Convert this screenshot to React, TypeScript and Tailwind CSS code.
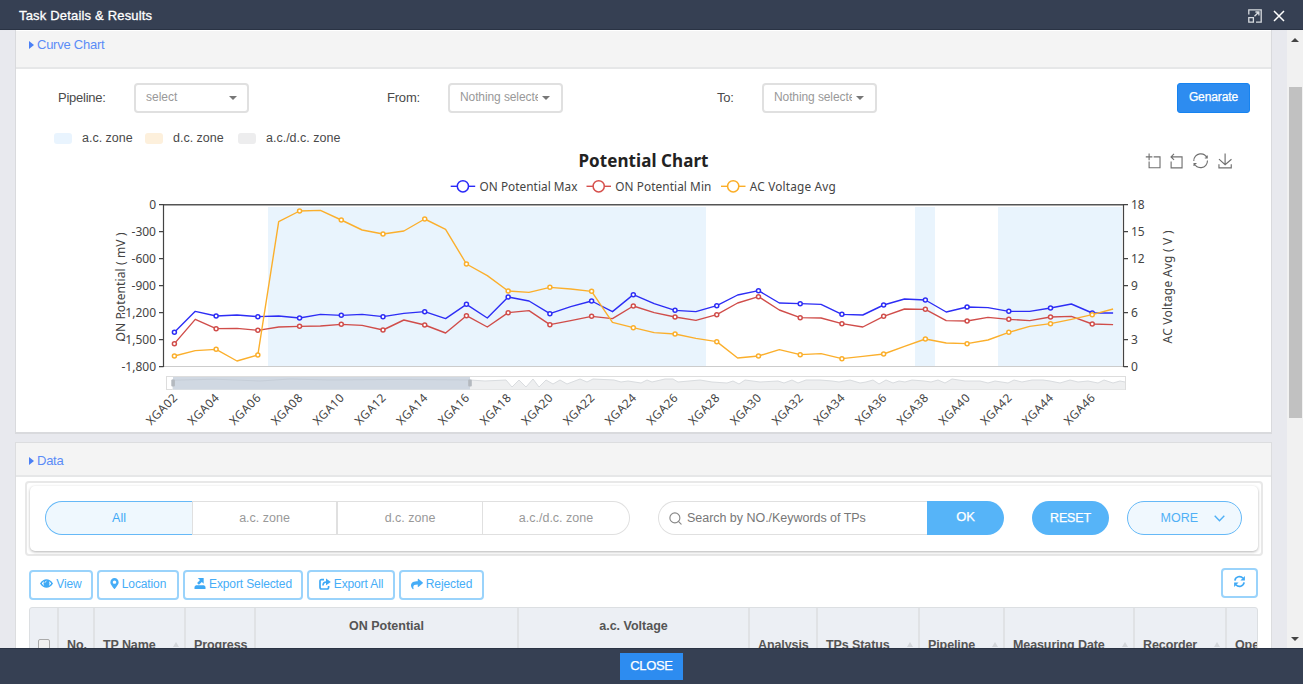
import React from "react";
import { FaMapMarkerAlt, FaShare } from "react-icons/fa";
import { FiSearch } from "react-icons/fi";

const X0 = 174.4;
const STEP = 20.86;
const xAt = (i: number) => X0 + i * STEP;
const yAt = (v: number) => 190 + v / 3;

const maxSeries = [427, 364, 378, 375, 380, 378, 384, 373, 376, 373, 380, 370, 365, 386, 343, 384, 321, 333, 371, 350, 333, 365, 314, 341, 361, 365, 347, 315, 302, 339, 341, 343, 373, 375, 345, 327, 330, 366, 351, 353, 364, 364, 354, 342, 369, 369];
const minSeries = [461, 388, 416, 415, 421, 411, 409, 408, 403, 406, 420, 390, 405, 429, 377, 411, 368, 362, 404, 392, 379, 386, 348, 368, 381, 391, 374, 339, 320, 360, 383, 384, 401, 411, 379, 357, 358, 392, 393, 382, 388, 392, 381, 379, 402, 404];
const acSeries = [498, 482, 478, 513, 495, 95, 63, 61, 90, 120, 132, 123, 87, 118, 222, 257, 303, 307, 292, 297, 304, 397, 413, 428, 432, 445, 455, 504, 498, 479, 494, 491, 506, 499, 492, 469, 447, 459, 461, 450, 427, 409, 401, 388, 374, 357];

const leftTicks = ["0", "-300", "-600", "-900", "-1,200", "-1,500", "-1,800"];
const rightTicks = ["18", "15", "12", "9", "6", "3", "0"];
const xLabels = Array.from({ length: 23 }, (_, i) => "XGA" + String(2 + i * 2).padStart(2, "0"));

const overview =
  "M172 380 L200 380 L215 379 L260 381 L290 379 L320 380 L360 379 L400 380 L440 379 L470 380 L485 381 L506 380 L512 387 L519 380 L526 387 L533 379 L539 387 L546 380 L553 384 L560 380 L567 384 L580 379 L587 382 L593 379 L614 380 L621 382 L628 381 L641 383 L647 380 L652 382 L665 379 L673 379 L678 382 L700 380 L712 382 L727 383 L733 381 L739 384 L745 380 L760 382 L778 381 L784 383 L792 380 L798 383 L806 380 L820 380 L832 381 L839 382 L850 380 L860 383 L866 382 L873 380 L879 384 L886 380 L893 383 L899 381 L905 382 L912 380 L924 381 L931 382 L938 380 L945 383 L952 379 L965 381 L980 381 L988 383 L995 381 L1008 383 L1014 380 L1022 382 L1032 380 L1043 380 L1050 381 L1060 383 L1070 380 L1078 382 L1088 381 L1098 383 L1104 380 L1113 383 L1120 381 L1125 382";

function Line({ values, color }: { values: number[]; color: string }) {
  return (
    <g>
      <polyline points={values.map((v, i) => `${xAt(i)},${yAt(v)}`).join(" ")} fill="none" stroke={color} strokeWidth="1.4" strokeLinejoin="round" />
      {values.map((v, i) => (i % 2 === 0 ? <circle key={i} cx={xAt(i)} cy={yAt(v)} r="2" fill="#fff" stroke={color} strokeWidth="1.5" /> : null))}
    </g>
  );
}

function LegendItem({ x, w, color, label }: { x: number; w: number; color: string; label: string }) {
  return (
    <g>
      <path d={`M${x} 186.3h24.5`} stroke={color} strokeWidth="1.4" />
      <circle cx={x + 12.2} cy="186.3" r="5.6" fill="#fff" stroke={color} strokeWidth="1.5" />
      <text x={x + 28.8} y="190.8" fontSize="11.8" fill="#444" textLength={w}>{label}</text>
    </g>
  );
}

function Chart() {
  return (
    <svg viewBox="16 148 1255 285" className="block h-[285px] w-[1255px] shrink-0 font-['Noto_Sans',sans-serif]">
      <text x="578.5" y="166.5" fontSize="17" fontWeight="700" fill="#222" textLength="130">Potential Chart</text>
      <LegendItem x={450.7} w={98} color="#2a2af8" label="ON Potential Max" />
      <LegendItem x={586.5} w={96} color="#d6504c" label="ON Potential Min" />
      <LegendItem x={721} w={86} color="#fbae28" label="AC Voltage Avg" />

      <g fill="none" stroke="#707070" strokeWidth="4.6">
        <path transform="translate(1145.8 153.6) scale(.245)" d="M0,13.5h26.9 M13.5,26.9V0 M32.1,13.5H58V58H13.5 V32.1" />
        <path transform="translate(1168.6 153.6) scale(.245)" d="M22,1.4L9.9,13.5l12.3,12.3 M10.3,13.5H54.9v44.6 H10.3v-26" />
        <path transform="translate(1193.3 153.4) scale(.245)" d="M47,18.9h9.8V8.7 M56.3,20.1 C52.1,9,40.5,0.6,26.8,2.1C12.6,3.7,1.6,16.2,2.1,30.6 M13,41.1H3.1v10.2 M3.7,39.9c4.2,11.1,15.8,19.5,29.5,18 c14.2-1.6,25.2-14.1,24.7-28.5" />
        <path transform="translate(1217.8 153.4) scale(.25)" d="M4.7,22.9L29.3,45.5L54.7,23.4M4.6,43.6L4.6,58L53.8,58L53.8,43.6M29.2,45.1L29.2,0" />
      </g>

      <g fill="#e9f4fd">
        <rect x="268" y="207" width="438" height="159" />
        <rect x="915" y="207" width="20" height="159" />
        <rect x="998" y="207" width="124" height="159" />
      </g>
      <path d="M164 366.5H1123" stroke="#ccc" />
      <path d="M163 204.7H1124" stroke="#555" strokeWidth="1.4" />
      <path d="M163.5 204V367M1123.5 204V367" stroke="#444" strokeWidth="1.2" />
      {leftTicks.map((t, i) => (
        <g key={i} fill="#444" fontSize="12">
          <path d={`M159 ${204.6 + i * 27}h4.5M1123.5 ${204.6 + i * 27}h4.5`} stroke="#444" strokeWidth="1.2" />
          <text x="156" y={209 + i * 27} textAnchor="end">{t}</text>
          <text x="1131" y={209 + i * 27}>{rightTicks[i]}</text>
        </g>
      ))}
      <text transform="translate(125.2 341.5) rotate(-90)" fontSize="12" fill="#444" textLength="109">ON Potential ( mV )</text>
      <text transform="translate(1171.5 343.5) rotate(-90)" fontSize="12" fill="#444" textLength="113">AC Voltage Avg ( V )</text>

      <Line values={maxSeries} color="#2d2df5" />
      <Line values={minSeries} color="#d04d4a" />
      <Line values={acSeries} color="#fbaf2c" />

      <rect x="166.5" y="376.5" width="959" height="13" fill="#fff" stroke="#ddd" />
      <path d={`${overview} V389.5 H172 Z`} fill="#eeeff0" />
      <path d={overview} fill="none" stroke="#d9dcdf" />
      <rect x="173" y="377" width="297" height="12.5" fill="#d0d8e2" />
      <path d="M173 380.2L215 379.2L260 381L290 379L330 380L400 379.4L470 380" fill="none" stroke="#c6ced8" />
      <rect x="171.3" y="379.5" width="3.6" height="7" rx="1" fill="#b4b9bf" />
      <rect x="468.2" y="379.5" width="3.6" height="7" rx="1" fill="#b4b9bf" />

      {xLabels.map((t, i) => (
        <text key={t} transform={`translate(${xAt(i * 2) + 3.6} 398.8) rotate(-45)`} fontSize="11.8" fill="#444" textAnchor="end" textLength="38">{t}</text>
      ))}
    </svg>
  );
}

function SelectBox({ text, full }: { text: string; full?: boolean }) {
  return (
    <div className="flex h-[30px] w-[115px] items-center rounded-[4px] border-2 border-[#e0e0e0] bg-white px-[10px] pb-px text-[12px] text-[#999]">
      <span className={full ? "w-[83px] overflow-hidden whitespace-nowrap" : "w-[78px] overflow-hidden tracking-[-0.1px] whitespace-nowrap"}>{text}</span>
      <svg viewBox="0 0 8 4" className={full ? "mt-[2px] h-[4px] w-[8px] shrink-0" : "mt-[2px] ml-[4px] h-[4px] w-[8px] shrink-0"}><path d="M0 0h8L4 4z" fill="#777" /></svg>
    </div>
  );
}

function Swatch({ cls, label, w }: { cls: string; label: string; w: string }) {
  return (
    <div className={"flex items-center gap-[10px] " + w}>
      <span className={"h-[11px] w-[18px] rounded-[3px] " + cls} />
      <span className="whitespace-nowrap">{label}</span>
    </div>
  );
}

function PanelTitle({ text, cls }: { text: string; cls: string }) {
  return (
    <div className={"flex items-center gap-[3px] border-b-2 border-[#e6e7e8] bg-[#f4f4f4] pl-[13px] text-[13px] text-[#5b8cf7] " + cls}>
      <svg viewBox="0 0 5 8" className="h-[8px] w-[5px]"><path d="M0 0L5 4L0 8z" fill="#4a7ff5" /></svg>
      <span className="tracking-[-0.25px]">{text}</span>
    </div>
  );
}

const RefreshIcon = () => (
  <svg viewBox="0 0 14 14" className="h-[13px] w-[13px]" fill="none" stroke="#3fa9f5" strokeWidth="1.8">
    <path d="M2 6A5 5 0 0 1 10.8 3.6M12 8A5 5 0 0 1 3.2 10.4" />
    <path d="M12.8 1v4.8H8zM1.2 13V8.2H6z" fill="#3fa9f5" stroke="none" />
  </svg>
);
const UploadIcon = () => (
  <svg viewBox="0 0 12 12" className="h-[11px] w-[12px]" fill="#3fa9f5">
    <path d="M3.5 0H10V6.2L8 4.3 4.8 7.4 2.8 5.4 6 2.2zM1.5 8h9L12 9.5V12H0V9.5z" />
  </svg>
);
const ShareIcon = () => (
  <svg viewBox="0 0 12 12" className="h-[12px] w-[12px]" fill="none" stroke="#3fa9f5" strokeWidth="1.7">
    <path d="M5 1.6H2.6Q1 1.6 1 3.2V9.3Q1 11 2.6 11H8Q9.6 11 9.6 9.3V8" />
    <path d="M4 7.6Q4 4 7.5 4" />
    <path d="M7 .6L11.8 4 7 7.3z" fill="#3fa9f5" stroke="none" />
  </svg>
);
const EyeIcon = () => (
  <svg viewBox="0 0 13 9" className="h-[9px] w-[13px]">
    <path d="M0 4.5Q3 .3 6.5 .3T13 4.5Q10 8.8 6.5 8.8T0 4.5z" fill="#3fa9f5" />
    <path d="M1.8 4.5Q2.6 3 3.9 2.2 3 4.6 4.2 6.9 2.6 6 1.8 4.5zM11.2 4.5Q10.4 3 9.1 2.2 10 4.6 8.8 6.9 10.4 6 11.2 4.5z" fill="#fff" />
    <path d="M4.9 3.8Q5.1 2.3 6.5 2.1" stroke="#fff" strokeWidth=".8" fill="none" />
  </svg>
);

function ActionButton({ w, icon, label }: { w: string; icon: React.ReactNode; label: string }) {
  return (
    <button className={"flex h-[30px] items-center justify-center gap-[3px] rounded-[4px] border-2 border-[#9ad3fb] bg-white pb-[3px] text-[12px] whitespace-nowrap text-[#46adf7] " + w}>
      {icon}
      <span className="tracking-[-0.12px]">{label}</span>
    </button>
  );
}

function Col({ w, label, sort, group }: { w: string; label: string; sort?: boolean; group?: boolean }) {
  return (
    <div className={"flex h-[75px] shrink-0 justify-between overflow-hidden border-r-2 border-[#e0e2e5] " + w + (group ? " justify-center pt-[9px]" : " items-center pr-[5px] pl-[8px]")}>
      <span className={group ? "w-full text-center" : "whitespace-nowrap tracking-[-0.1px]"}>{label}</span>
      {sort && <svg viewBox="0 0 6 5" className="mt-[-3px] h-[5px] w-[6px] shrink-0"><path d="M3 0l3 5H0z" fill="#d3d6da" /></svg>}
    </div>
  );
}

export default function App() {
  return (
    <div className="flex h-[684px] w-[1303px] flex-col overflow-hidden bg-[#e8e9ee] font-['Liberation_Sans',Arial,sans-serif] text-[13px] text-[#4a4a4a]">
      <header className="flex h-[30px] shrink-0 items-center justify-between border-b border-[#2a3344] bg-[#364053] pr-[18px] pl-[19px] text-white">
        <h1 className="mt-[2px] text-[13px] tracking-[0.18px] [-webkit-text-stroke:0.3px_white]">Task Details &amp; Results</h1>
        <div className="mt-[3px] flex items-center gap-[11px]">
          <svg viewBox="0 0 14 14" className="h-[14px] w-[14px]" fill="none" stroke="#d8dbe0" strokeWidth="1.3">
            <path d="M.8 5.5V.8H13.2V13.2H8M.8 8.6H5.4V13.2H.8zM6.5 7.3L10.8 3M7.4 3H10.9V6.5" />
          </svg>
          <svg viewBox="0 0 12 12" className="h-[12px] w-[12px]" stroke="#fff" strokeWidth="1.5"><path d="M1 1l10 10M11 1L1 11" /></svg>
        </div>
      </header>

      <div className="flex h-[618px] shrink-0 overflow-hidden">
        <main className="flex w-[1287px] shrink-0 flex-col pl-[15px]">
          <section className="h-[404px] w-[1257px] shrink-0 overflow-hidden border-x border-b-2 border-[#d9dadd] bg-white">
            <PanelTitle text="Curve Chart" cls="h-[39px] pb-[8px] border-t border-t-white" />
            <div className="flex h-[57px] items-center pl-[42px] text-[13px]">
              <span className="w-[76px] tracking-[-0.25px]">Pipeline:</span>
              <SelectBox text="select" full />
              <span className="ml-[138px] w-[61px] tracking-[-0.2px]">From:</span>
              <SelectBox text="Nothing selected" />
              <span className="ml-[154px] w-[45px] tracking-[-0.2px]">To:</span>
              <SelectBox text="Nothing selected" />
              <button className="ml-[300px] h-[30px] w-[73px] rounded-[3px] border border-[#1683f0] bg-[#2d8cf0] pb-px text-[12px] tracking-[-0.1px] text-white [-webkit-text-stroke:0.25px_white]">Genarate</button>
            </div>
            <div className="flex h-[22px] items-center pt-[3px] pl-[38px] text-[12.5px]">
              <Swatch cls="bg-[#e9f4fe]" label="a.c. zone" w="w-[91px]" />
              <Swatch cls="bg-[#fdf0dc]" label="d.c. zone" w="w-[93px]" />
              <Swatch cls="bg-[#ededee]" label="a.c./d.c. zone" w="w-[110px]" />
            </div>
            <Chart />
          </section>

          <section className="mt-[8px] w-[1257px] shrink-0 border border-[#dcdddf] bg-white">
            <PanelTitle text="Data" cls="h-[34px] pt-[3px]" />
            <div className="mt-[4px] ml-[9px] h-[75px] w-[1238px] rounded-[4px] border-2 border-[#e8e8e8] p-[3px]">
              <div className="flex h-[65px] w-[1228px] items-center rounded-[5px] bg-white pb-[1px] pl-[15px] shadow-[0_1px_3px_rgba(0,0,0,0.3)]">
                <div className="flex h-[34px] text-[12.5px] text-[#999]">
                  <div className="flex w-[147px] items-center justify-center rounded-l-[17px] border border-r-0 border-[#66b9f7] bg-[#eff8fe] text-[#3fa9f5]">All</div>
                  <div className="flex w-[146px] items-center justify-center border-y border-r-2 border-l border-[#e0e0e0]">a.c. zone</div>
                  <div className="flex w-[145px] items-center justify-center border-y border-r border-[#e0e0e0]">d.c. zone</div>
                  <div className="flex w-[147px] items-center justify-center rounded-r-[17px] border-y border-r border-[#e0e0e0]">a.c./d.c. zone</div>
                </div>
                <div className="ml-[28px] flex h-[34px] w-[269px] items-center gap-[4px] rounded-l-[17px] border border-r-0 border-[#e0e0e0] pl-[9px] text-[12.5px] text-[#777]">
                  <FiSearch className="h-[15px] w-[15px] text-[#888]" strokeWidth={1.8} />
                  <span className="tracking-[-0.03px] whitespace-nowrap">Search by NO./Keywords of TPs</span>
                </div>
                <button className="h-[34px] w-[77px] rounded-r-[17px] bg-[#56b4f8] pb-[2px] text-[13px] tracking-[-0.2px] text-white [-webkit-text-stroke:0.25px_white]">OK</button>
                <button className="ml-[28px] h-[34px] w-[77px] rounded-[17px] bg-[#56b4f8] text-[12.5px] tracking-[-0.15px] text-white [-webkit-text-stroke:0.25px_white]">RESET</button>
                <button className="ml-[18px] flex h-[34px] w-[115px] items-center justify-end gap-[16px] rounded-[17px] border border-[#66b9f7] bg-[#f0f8fe] pr-[16px] text-[12.5px] text-[#4fb0f6]">
                  MORE
                  <svg viewBox="0 0 11 7" className="h-[7px] w-[11px]" fill="none" stroke="#4fb0f6" strokeWidth="1.4"><path d="M.7.8L5.5 5.8 10.3.8" /></svg>
                </button>
              </div>
            </div>
            <div className="mt-[12px] flex h-[32px] items-end gap-[4px] pl-[13px]">
              <ActionButton w="w-[64px]" icon={<EyeIcon />} label="View" />
              <ActionButton w="w-[82px]" icon={<FaMapMarkerAlt className="h-[11px] w-[9px]" />} label="Location" />
              <ActionButton w="w-[120px]" icon={<UploadIcon />} label="Export Selected" />
              <ActionButton w="w-[88px]" icon={<ShareIcon />} label="Export All" />
              <ActionButton w="w-[85px]" icon={<FaShare className="h-[12px] w-[12px]" />} label="Rejected" />
              <button className="mb-[2px] ml-[733px] flex h-[30px] w-[37px] items-center justify-center rounded-[4px] border-2 border-[#9ad3fb] bg-white pb-[3px]"><RefreshIcon /></button>
            </div>
            <div className="mt-[7px] ml-[13px] flex w-[1229px] overflow-hidden rounded-t-[3px] border border-[#dcdfe2] bg-[#eceff4] text-[12.5px] font-bold text-[#555]">
              <div className="flex h-[75px] w-[29px] shrink-0 items-center justify-center border-r-2 border-[#e0e2e5]">
                <span className="mb-[1px] h-[12px] w-[12px] rounded-[2px] border border-[#aaa] bg-[#f0f0f0]" />
              </div>
              <Col w="w-[36px]" label="No." />
              <Col w="w-[91px]" label="TP Name" sort />
              <Col w="w-[70px]" label="Progress" />
              <Col w="w-[263px]" label="ON Potential" group />
              <Col w="w-[231px]" label="a.c. Voltage" group />
              <Col w="w-[68px]" label="Analysis" />
              <Col w="w-[102px]" label="TPs Status" sort />
              <Col w="w-[85px]" label="Pipeline" sort />
              <Col w="w-[130px]" label="Measuring Date" sort />
              <Col w="w-[92px]" label="Recorder" sort />
              <Col w="w-[92px]" label="Operator" />
            </div>
          </section>
        </main>
        <aside className="flex w-[16px] shrink-0 flex-col items-center bg-[#f1f1f1]">
          <svg viewBox="0 0 8 4" className="mt-[8px] h-[4px] w-[8px]"><path d="M4 0l4 4H0z" fill="#444" /></svg>
          <div className="mt-[45px] h-[331px] w-[13px] bg-[#c1c1c1]" />
          <svg viewBox="0 0 8 4" className="mt-auto mb-[7px] h-[4px] w-[8px]"><path d="M0 0h8L4 4z" fill="#444" /></svg>
        </aside>
      </div>

      <footer className="flex h-[36px] shrink-0 items-center justify-center border-t border-[#2a3344] bg-[#364053]">
        <button className="mb-px h-[27px] w-[63px] bg-[#2d8cf0] text-[13px] tracking-[-0.35px] text-white [-webkit-text-stroke:0.25px_white]">CLOSE</button>
      </footer>
    </div>
  );
}
